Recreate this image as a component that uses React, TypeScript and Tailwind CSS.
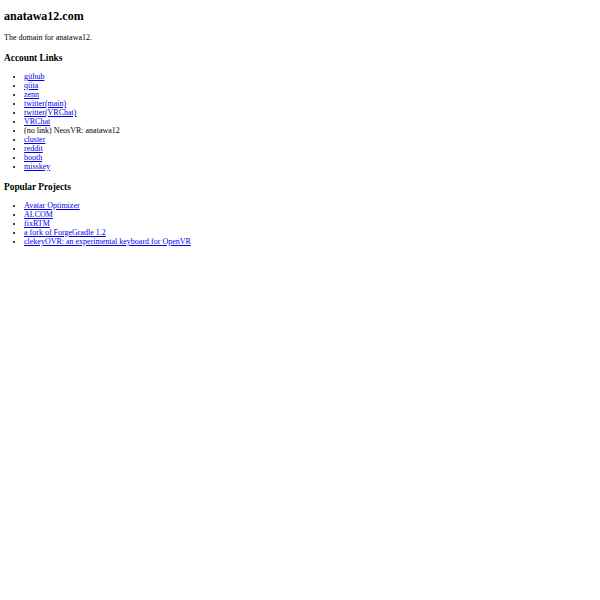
const accountLinks: { label: string; href?: string }[] = [
  { label: 'github', href: 'https://github.com/anatawa12' },
  { label: 'qiita', href: 'https://qiita.com/anatawa12' },
  { label: 'zenn', href: 'https://zenn.dev/anatawa12' },
  { label: 'twitter(main)', href: 'https://twitter.com/anatawa12_' },
  { label: 'twitter(VRChat)', href: 'https://twitter.com/anatawa12_vrc' },
  { label: 'VRChat', href: 'https://vrchat.com/home/user/anatawa12' },
  { label: '(no link) NeosVR: anatawa12' },
  { label: 'cluster', href: 'https://cluster.mu/u/anatawa12' },
  { label: 'reddit', href: 'https://www.reddit.com/user/anatawa12' },
  { label: 'booth', href: 'https://anatawa12.booth.pm' },
  { label: 'misskey', href: 'https://misskey.io/@anatawa12' },
];

const projects = [
  'Avatar Optimizer',
  'ALCOM',
  'fixRTM',
  'a fork of ForgeGradle 1.2',
  'clekeyOVR: an experimental keyboard for OpenVR',
];

function LinkList({ items }: { items: { label: string; href?: string }[] }) {
  return (
    <ul className="list-disc pl-[20px] my-[8px]">
      {items.map(item => (
        <li key={item.label} className="leading-[9px]">
          {item.href ? (
            <a href={item.href} className="text-[#0000ee] underline">
              {item.label}
            </a>
          ) : (
            item.label
          )}
        </li>
      ))}
    </ul>
  );
}

export default function App() {
  return (
    <div className="min-h-[600px] bg-white text-black px-[4px] pt-[4px] text-[8px] font-['Liberation_Serif',serif] flow-root">
      <h1 className="text-[12px] font-bold leading-[14px] mt-[5px] mb-[10px]">anatawa12.com</h1>
      <p className="leading-[9px] my-[8px]">The domain for anatawa12.</p>
      <h3 className="text-[9.36px] font-bold leading-[11px] mt-[11px] mb-[8px]">Account Links</h3>
      <LinkList items={accountLinks} />
      <h3 className="text-[9.36px] font-bold leading-[11px] mt-[11px] mb-[8px]">Popular Projects</h3>
      <LinkList items={projects.map(label => ({ label, href: '#' }))} />
    </div>
  );
}
